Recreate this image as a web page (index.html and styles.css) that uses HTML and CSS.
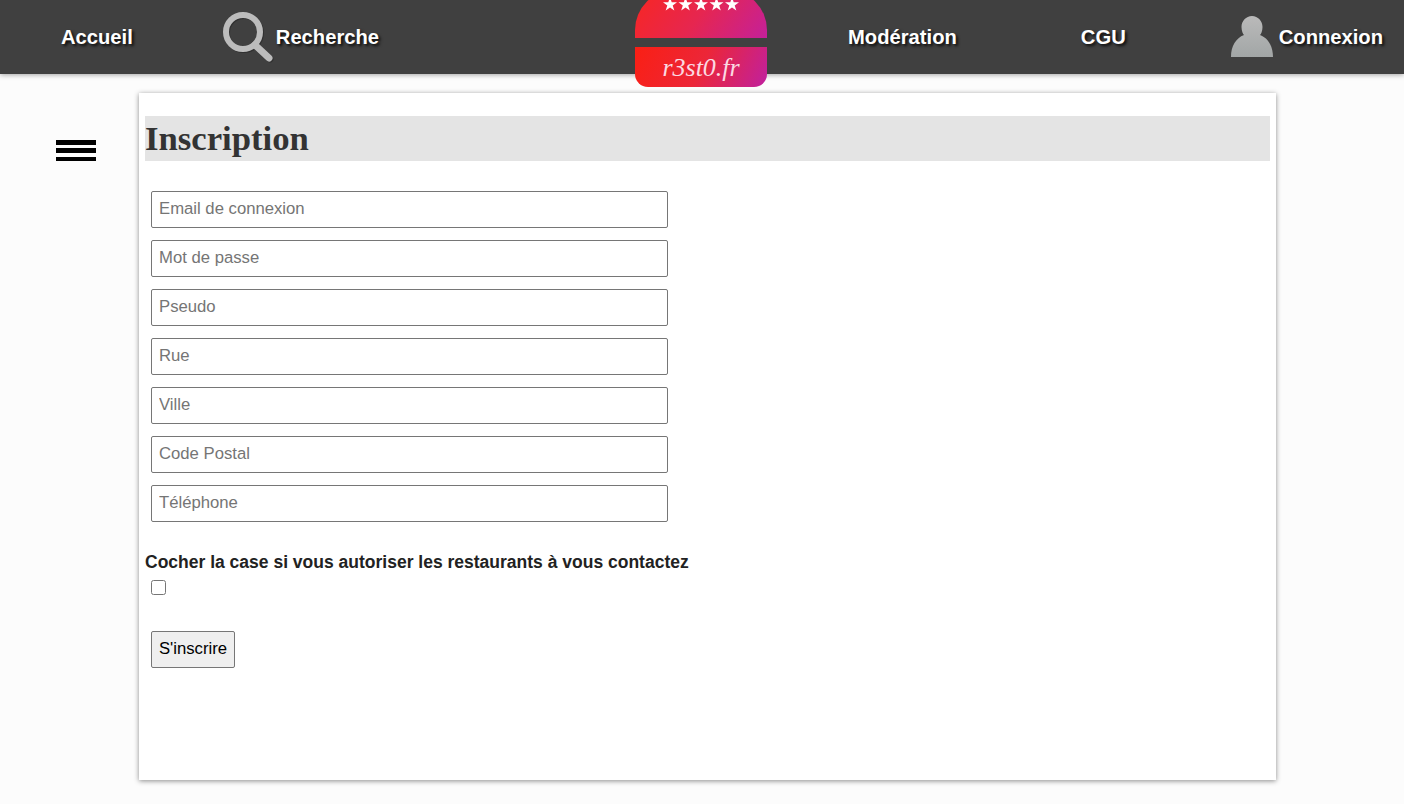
FILE: index.html
```html
<!DOCTYPE html>
<html lang="fr">
<head>
<meta charset="utf-8">
<title>Inscription</title>
<link rel="stylesheet" href="styles.css">
</head>
<body>
<header class="topbar">
  <a class="nav-item nav-accueil">Accueil</a>
  <a class="nav-item nav-recherche">
    <svg class="icon-search" width="52" height="52" viewBox="0 0 52 52">
      <circle cx="21" cy="21" r="17" fill="none" stroke="#000" stroke-opacity=".25" stroke-width="6" transform="translate(1 1)"/>
      <path d="M33 34 L47 47" stroke="#000" stroke-opacity=".25" stroke-width="7" stroke-linecap="round" transform="translate(1 1)"/>
      <circle cx="21" cy="21" r="17" fill="none" stroke="#bcbcbc" stroke-width="6"/>
      <path d="M33 34 L47 47" stroke="#bcbcbc" stroke-width="7" stroke-linecap="round"/>
    </svg>
    <span>Recherche</span>
  </a>
  <div class="logo">
    <div class="bun bun-top">
      <svg class="stars" width="76" height="11" viewBox="0 0 76 11">
        <defs>
          <polygon id="star" points="6.500,-2 8.200,3.200 13.500,3.200 9.200,6.500 10.800,11.500 6.500,8.400 2.200,11.500 3.800,6.500 -0.500,3.200 4.800,3.200" fill="#fff"/>
        </defs>
        <use href="#star" x="0.500" y="-1"/>
        <use href="#star" x="16" y="-1"/>
        <use href="#star" x="31.500" y="-1"/>
        <use href="#star" x="47" y="-1"/>
        <use href="#star" x="62.500" y="-1"/>
      </svg>
    </div>
    <div class="bun bun-bottom"><span class="logo-text">r3st0.fr</span></div>
  </div>
  <a class="nav-item nav-moderation">Modération</a>
  <a class="nav-item nav-cgu">CGU</a>
  <a class="nav-item nav-connexion">
    <svg class="icon-user" width="44" height="42" viewBox="0 0 44 42">
      <defs>
        <linearGradient id="userfill" x1="0" y1="0" x2="0" y2="1">
          <stop offset="0" stop-color="#bababa"/>
          <stop offset="1" stop-color="#a2a6a6"/>
        </linearGradient>
      </defs>
      <path d="M22 0 C28 0 32.500 5 32.500 11 C32.500 15 31 18 30 19 C38 22 43 30 43 41 L1 41 C1 30 6 22 14 19 C13 18 11.500 15 11.500 11 C11.500 5 16 0 22 0 Z" fill="url(#userfill)"/>
    </svg>
    <span>Connexion</span>
  </a>
</header>

<div class="page">
  <div class="burger"><span></span><span></span><span class="bar-thin"></span></div>
  <main class="card">
    <h1 class="title">Inscription</h1>
    <form class="form">
      <div class="fields">
        <input class="field" type="text" placeholder="Email de connexion">
        <input class="field" type="password" placeholder="Mot de passe">
        <input class="field" type="text" placeholder="Pseudo">
        <input class="field" type="text" placeholder="Rue">
        <input class="field" type="text" placeholder="Ville">
        <input class="field" type="text" placeholder="Code Postal">
        <input class="field" type="text" placeholder="Téléphone">
      </div>
      <label class="consent" for="consent">Cocher la case si vous autoriser les restaurants à vous contactez</label>
      <input class="check" id="consent" type="checkbox">
      <button class="submit" type="button">S'inscrire</button>
    </form>
  </main>
</div>
</body>
</html>
```
FILE: styles.css
```css
* { box-sizing: border-box; }
html, body { margin: 0; height: 100%; }
body {
  background: #fcfcfc;
  font-family: "Liberation Sans", Arial, sans-serif;
  color: #222;
  overflow: hidden;
}
.topbar {
  height: 74px;
  background: #404040;
  box-shadow: 0 1px 5px rgba(0, 0, 0, .35);
  display: flex;
  align-items: center;
  position: relative;
}
.nav-item {
  display: flex;
  align-items: center;
  color: #fff;
  font-weight: 700;
  font-size: 20.2px;
  text-shadow: 2px 2px 3px rgba(0, 0, 0, .85);
  white-space: nowrap;
}
.nav-accueil { margin-left: 61px; }
.nav-recherche { margin-left: 89px; }
.icon-search { margin-right: 2px; }
.icon-user { margin-right: 5px; margin-top: -1px; }
.logo {
  margin: -10px 0 0 256px;
  width: 132px;
  align-self: flex-start;
  flex: none;
  display: flex;
  flex-direction: column;
  position: relative;
  z-index: 2;
}
.bun {
  display: flex;
  justify-content: center;
  overflow: hidden;
}
.bun-top {
  height: 48px;
  background: linear-gradient(125deg, #f5262a 10%, #e62650 50%, #c4209a 100%);
  border-radius: 40px 40px 0 0 / 40px 40px 0 0;
  padding-top: 10px;
}
.bun-bottom {
  height: 40px;
  margin-top: 9px;
  background: linear-gradient(115deg, #fa1f14 0%, #ec2638 50%, #c0209f 100%);
  border-radius: 0 0 13px 13px;
}
.stars { flex: none; }
.logo-text {
  color: #fbd9e2;
  font-family: "Liberation Serif", serif;
  font-style: italic;
  font-size: 26px;
  line-height: 38px;
  margin-top: 2px;
}
.nav-moderation { margin-left: 81px; }
.nav-cgu { margin-left: 124px; }
.nav-connexion { margin-left: 104px; }

.page {
  display: flex;
  align-items: flex-start;
}
.burger {
  width: 40px;
  margin: 66px 0 0 56px;
  display: flex;
  flex-direction: column;
  flex: none;
}
.burger span {
  height: 5px;
  margin-bottom: 3px;
  background: #000;
}
.burger .bar-thin {
  height: 4px;
  margin: 1px 0 0;
}
.card {
  margin: 19px 0 0 43px;
  width: 1137px;
  height: 687px;
  background: #fff;
  box-shadow: 0 1px 5px rgba(0, 0, 0, .45);
  padding: 23px 6px 0;
}
.title {
  margin: 0;
  height: 45px;
  background: #e4e4e4;
  color: #333;
  font-family: "Liberation Serif", serif;
  font-size: 34.700px;
  line-height: 45px;
  font-weight: 700;
}
.form {
  display: flex;
  flex-direction: column;
  align-items: flex-start;
}
.fields {
  display: flex;
  flex-direction: column;
  gap: 12px;
  margin: 30px 0 0 6px;
}
.field {
  width: 517px;
  height: 37px;
  border: 1px solid #767676;
  border-radius: 2px;
  padding: 0 7px 2px;
  font-family: "Liberation Sans", Arial, sans-serif;
  font-size: 16.700px;
  background: #fff;
}
.field::placeholder { color: #757575; opacity: 1; }
.consent {
  margin-top: 30px;
  font-weight: 700;
  font-size: 17.500px;
  line-height: 20px;
  color: #222;
}
.check {
  width: 15px;
  height: 15px;
  margin: 8px 0 0 6px;
}
.submit {
  margin: 36px 0 0 6px;
  width: 84px;
  height: 37px;
  padding: 0 0 2px;
  font-family: "Liberation Sans", Arial, sans-serif;
  font-size: 16.700px;
  color: #000;
  background: #efefef;
  border: 1px solid #767676;
  border-radius: 2px;
}
```
